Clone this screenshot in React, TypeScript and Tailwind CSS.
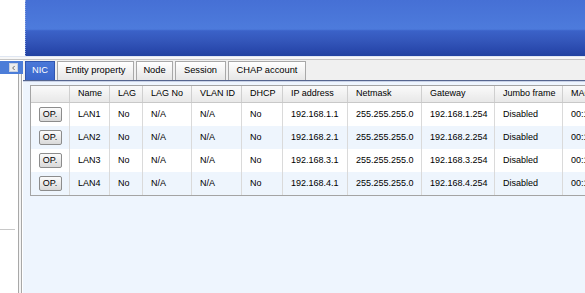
import { ChevronLeft } from 'lucide-react'

const cols = [
  { key: 'op', label: '', w: 'w-[39px]' },
  { key: 'name', label: 'Name', w: 'w-[40px]' },
  { key: 'lag', label: 'LAG', w: 'w-[33px]' },
  { key: 'lagNo', label: 'LAG No', w: 'w-[49px]' },
  { key: 'vlan', label: 'VLAN ID', w: 'w-[50px]' },
  { key: 'dhcp', label: 'DHCP', w: 'w-[41px]' },
  { key: 'ip', label: 'IP address', w: 'w-[65px]' },
  { key: 'mask', label: 'Netmask', w: 'w-[74px]' },
  { key: 'gw', label: 'Gateway', w: 'w-[73px]' },
  { key: 'jumbo', label: 'Jumbo frame', w: 'w-[68px]' },
  { key: 'mac', label: 'MAC address', w: 'w-[110px]' },
]

const rows = [1, 2, 3, 4].map((n) => ({
  name: `LAN${n}`,
  lag: 'No',
  lagNo: 'N/A',
  vlan: 'N/A',
  dhcp: 'No',
  ip: `192.168.${n}.1`,
  mask: '255.255.255.0',
  gw: `192.168.${n}.254`,
  jumbo: 'Disabled',
  mac: `00:14:fd:12:34:5${n}`,
}))

const tabs = [
  { label: 'NIC', w: 'w-[30px]', active: true },
  { label: 'Entity property', w: 'w-[77px]' },
  { label: 'Node', w: 'w-[37px]' },
  { label: 'Session', w: 'w-[51px]' },
  { label: 'CHAP account', w: 'w-[78px]' },
]

export default function App() {
  return (
    <div className="w-[585px] h-[293px] overflow-hidden bg-white flex flex-col font-['Liberation_Sans',Arial,sans-serif] text-black">
      {/* top banner */}
      <div className="flex h-[56px] shrink-0">
        <div className="w-[25px] bg-white" />
        <div className="flex-1 border-l border-dotted border-[#8fa6e0] bg-[linear-gradient(to_bottom,#4670d5_0%,#4d7bdc_52%,#3b62c8_55%,#3457bb_72%,#2a4aae_88%,#2242a0_100%)]" />
      </div>
      <div className="h-[1px] bg-[#dfe6f2] shrink-0" />
      <div className="h-[2px] bg-[#f7f7f7] shrink-0" />
      <div className="h-[1px] bg-[#c4c4c4] shrink-0" />

      <div className="flex flex-1 min-h-0">
        {/* left nav */}
        <div className="w-[23px] shrink-0 flex flex-col bg-white">
          <div className="h-[13px] mt-[1px] bg-[#4c7dd8] flex items-center justify-end pr-[5px]">
            <div className="w-[9px] h-[9px] bg-[#eeeeee] border border-[#c8d0e0] flex items-center justify-center">
              <ChevronLeft size={8} strokeWidth={3} className="text-[#555]" />
            </div>
          </div>
          <div className="flex flex-1">
            <div className="w-[18px] flex flex-col">
              <div className="h-[155px]" />
              <div className="h-[1px] w-[15px] bg-[#c8c8c8]" />
            </div>
            <div className="w-[1px] bg-[#a8a8a8]" />
            <div className="w-[2px] bg-[#f4f4f4]" />
            <div className="w-[1px] bg-[#a8a8a8]" />
          </div>
        </div>

        {/* main panel */}
        <div className="flex-1 min-w-0 flex flex-col bg-[#eef5fe]">
          <div className="h-[21px] shrink-0 bg-[#f0f0f0] border-b border-[#55658f] flex items-end gap-[2px] pl-[2px]">
            {tabs.map((t) => (
              <div
                key={t.label}
                className={`${t.w} h-[19px] flex items-center justify-center text-[9.3px] border border-b-0 ${
                  t.active
                    ? 'bg-[linear-gradient(to_bottom,#4a78d8,#3a66cc)] border-[#2f55b0] text-white'
                    : 'bg-[linear-gradient(to_bottom,#ffffff,#e6e6e6)] border-[#a8a8a8]'
                }`}
              >
                {t.label}
              </div>
            ))}
          </div>
          <div className="h-[1px] bg-[#c9d2e6] shrink-0" />

          <div className="mt-[3px] ml-[7px] border border-[#a4a4a4] self-start">
            <div className="flex h-[17px] bg-[linear-gradient(to_bottom,#fafafa,#e8e8e8)] border-b border-[#c8c8c8]">
              {cols.map((c) => (
                <div
                  key={c.key}
                  className={`${c.w} shrink-0 border-r border-[#cfcfcf] flex items-center pl-[8px] text-[9px] whitespace-nowrap`}
                >
                  {c.label}
                </div>
              ))}
            </div>
            {rows.map((r, i) => (
              <div key={r.name} className={`flex h-[23px] ${i % 2 === 1 ? 'bg-[#eef5fd]' : 'bg-white'}`}>
                {cols.map((c) => (
                  <div
                    key={c.key}
                    className={`${c.w} shrink-0 border-r border-[#dadada] flex items-center text-[9px] whitespace-nowrap ${
                      c.key === 'op' ? 'justify-center' : 'pl-[8px]'
                    }`}
                  >
                    {c.key === 'op' ? (
                      <button className="w-[23px] h-[15px] rounded-[2px] border border-[#8c8c8c] bg-[linear-gradient(to_bottom,#fbfbfb,#d9d9d9)] text-[9px] leading-none flex items-center justify-center">
                        OP.
                      </button>
                    ) : (
                      (r as Record<string, string>)[c.key]
                    )}
                  </div>
                ))}
              </div>
            ))}
          </div>
        </div>
      </div>
    </div>
  )
}
